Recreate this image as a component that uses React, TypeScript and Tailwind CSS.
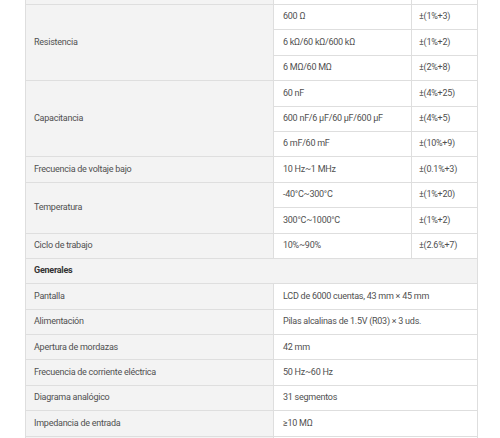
import React from 'react';

type Row = { label?: string; span?: number; value: string; acc?: string };

const rows: Row[] = [
  { label: 'Resistencia', span: 3, value: '600 Ω', acc: '±(1%+3)' },
  { value: '6 kΩ/60 kΩ/600 kΩ', acc: '±(1%+2)' },
  { value: '6 MΩ/60 MΩ', acc: '±(2%+8)' },
  { label: 'Capacitancia', span: 3, value: '60 nF', acc: '±(4%+25)' },
  { value: '600 nF/6 µF/60 µF/600 µF', acc: '±(4%+5)' },
  { value: '6 mF/60 mF', acc: '±(10%+9)' },
  { label: 'Frecuencia de voltaje bajo', span: 1, value: '10 Hz~1 MHz', acc: '±(0.1%+3)' },
  { label: 'Temperatura', span: 2, value: '-40°C~300°C', acc: '±(1%+20)' },
  { value: '300°C~1000°C', acc: '±(1%+2)' },
  { label: 'Ciclo de trabajo', span: 1, value: '10%~90%', acc: '±(2.6%+7)' },
];

const generales = [
  ['Pantalla', 'LCD de 6000 cuentas, 43 mm × 45 mm'],
  ['Alimentación', 'Pilas alcalinas de 1.5V (R03) × 3 uds.'],
  ['Apertura de mordazas', '42 mm'],
  ['Frecuencia de corriente eléctrica', '50 Hz~60 Hz'],
  ['Diagrama analógico', '31 segmentos'],
  ['Impedancia de entrada', '≥10 MΩ'],
];

const cell = 'border border-[#dedede] h-[25.4px] py-0 align-middle';

export default function App() {
  return (
    <div className="h-[438px] w-[500px] overflow-hidden bg-white font-['Roboto',sans-serif] text-[9px] tracking-[-0.25px] text-[#505050]">
      <table className="-mt-[21.4px] ml-[25px] w-[452px] table-fixed border-collapse">
        <colgroup>
          <col className="w-[248px]" />
          <col className="w-[138px]" />
          <col className="w-[66px]" />
        </colgroup>
        <tbody>
          {/* row above the view, only its bottom edge shows */}
          <tr>
            <td className={`${cell} bg-[#f3f3f3]`} />
            <td className={cell} />
            <td className={cell} />
          </tr>
          {rows.map((r, i) => (
            <tr key={i}>
              {r.label && (
                <td rowSpan={r.span} className={`${cell} bg-[#f3f3f3] pl-2`}>
                  {r.label}
                </td>
              )}
              <td className={`${cell} pl-[9px]`}>{r.value}</td>
              <td className={`${cell} pl-[7px]`}>{r.acc}</td>
            </tr>
          ))}
          <tr>
            <td colSpan={3} className={`${cell} bg-[#f3f3f3] pl-2 font-bold text-[#333]`}>
              Generales
            </td>
          </tr>
          {generales.map(([k, v]) => (
            <tr key={k}>
              <td className={`${cell} bg-[#f3f3f3] pl-2`}>{k}</td>
              <td colSpan={2} className={`${cell} pl-[9px]`}>{v}</td>
            </tr>
          ))}
          <tr>
            <td className={`${cell} bg-[#f3f3f3]`} />
            <td colSpan={2} className={cell} />
          </tr>
        </tbody>
      </table>
    </div>
  );
}
